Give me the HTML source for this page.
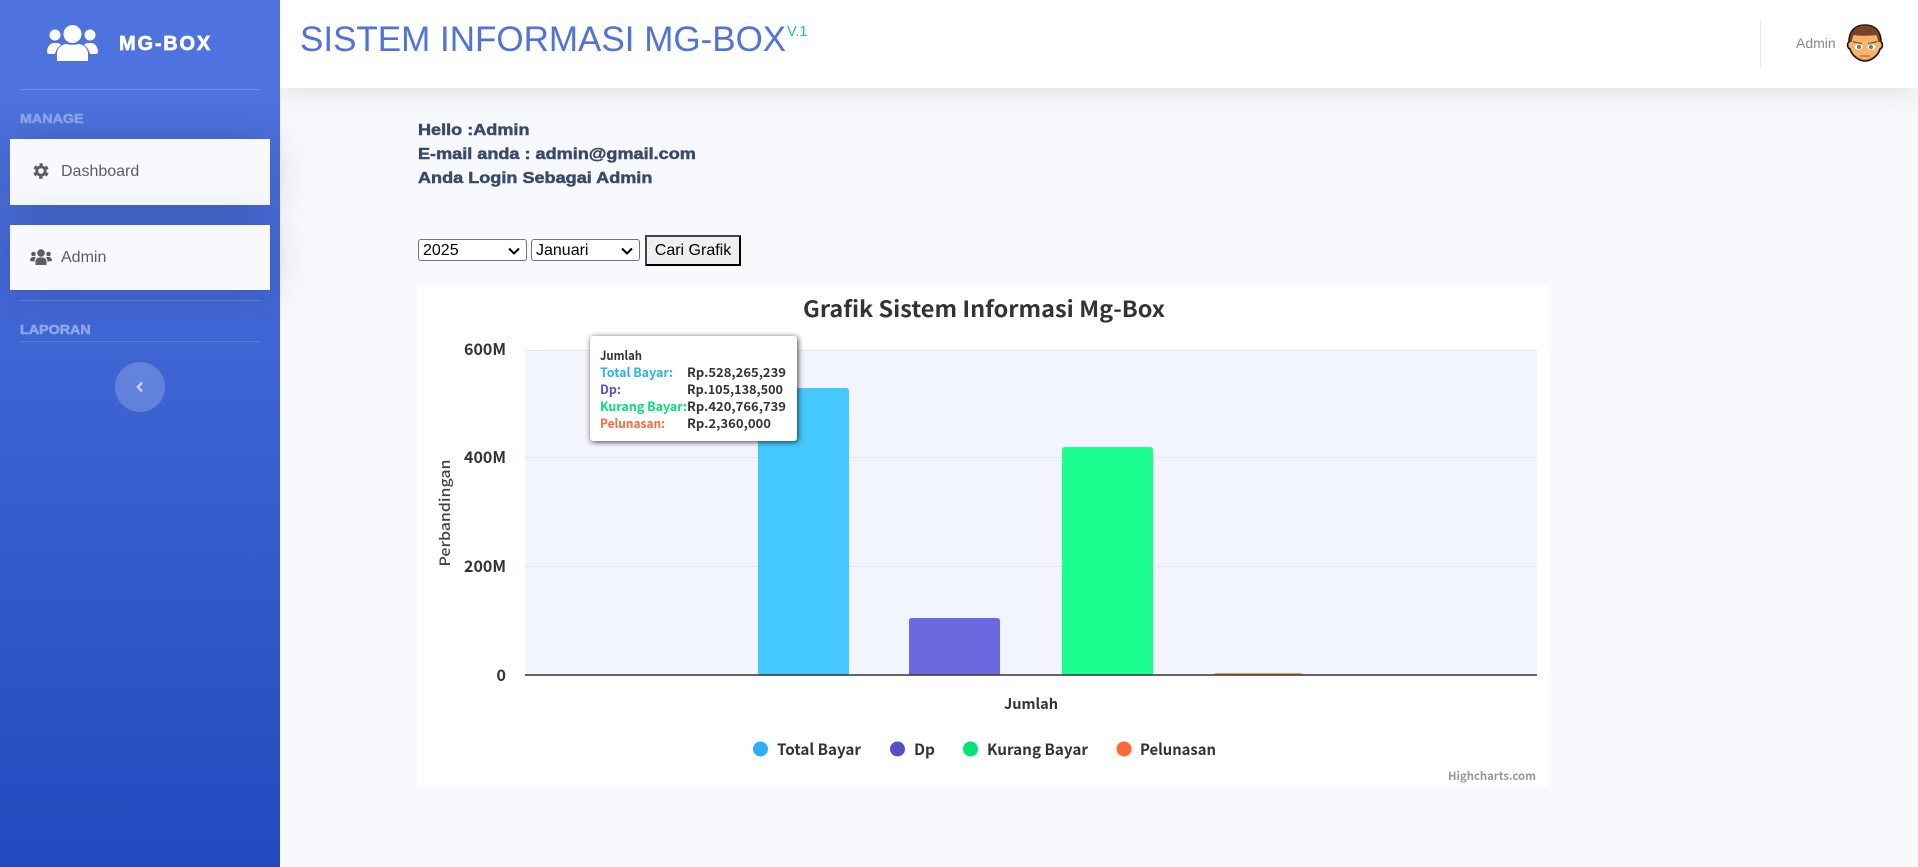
<!DOCTYPE html>
<html><head><meta charset="utf-8"><title>MG-BOX</title>
<style>
html,body{margin:0;padding:0;width:1918px;height:867px;overflow:hidden;background:#f8f9fc;font-family:"Liberation Sans",sans-serif}
.a{position:absolute;white-space:nowrap}
#side{left:0;top:0;width:280px;height:867px;background:linear-gradient(180deg,#4e73df 10%,#224abe 100%)}
.item{left:10px;width:260px;background:#f8f9fc;color:#5a5c69;font-size:16px;box-sizing:border-box;box-shadow:0 2px 40px rgba(40,40,70,.25)}
.lab{left:20px;font-size:13px;font-weight:bold;color:#8fa6ea;-webkit-text-stroke:.55px #8fa6ea;transform:scaleX(1.1);transform-origin:0 0}
#top{left:280px;top:0;width:1638px;height:88px;background:#fff;box-shadow:0 2px 28px rgba(58,59,69,.15)}
.hi{left:418px;font-size:16px;font-weight:bold;color:#3a4a6e;-webkit-text-stroke:.5px #3a4a6e;line-height:24px;transform:scaleX(1.13);transform-origin:0 0}
select{position:absolute;font:16px "Liberation Sans",sans-serif;background:#fff;color:#000;border:1px solid #767676;border-radius:3px;padding:0 0 0 4px;margin:0;box-sizing:border-box;appearance:none;-webkit-appearance:none}
button{position:absolute;font:16px "Liberation Sans",sans-serif;background:#efefef;color:#000;border:2px solid #000;border-top-color:#444;border-left-color:#444;padding:0;margin:0;box-sizing:border-box}
svg text{font-family:"Noto Sans CJK SC","Liberation Sans",sans-serif;font-weight:bold}
</style></head>
<body>
<div class="a" id="top"></div>
<div class="a" style="left:300px;top:19px;font-size:35px;line-height:41px;color:#4e73df">SISTEM INFORMASI MG-BOX</div>
<div class="a" style="left:787px;top:24px;font-size:14.5px;line-height:17px;color:#1cc88a">V.1</div>
<div class="a" style="left:1760px;top:20px;width:1px;height:48px;background:#e3e6f0"></div>
<div class="a" style="left:1796px;top:35px;font-size:14px;line-height:16px;color:#858796">Admin</div>
<svg class="a" style="left:1846px;top:23px" width="38" height="40" viewBox="0 0 38 40">
<path d="M3 19C3 7 10 2 19 2s16 5 16 17c2 1 2 6-1 7-2 7-9 12-15 12S6 33 4 26c-3-1-3-6-1-7z" fill="#f8b468" stroke="#161616" stroke-width="1.600"/>
<path d="M4 19C3 8 10 3 19 3s16 5 15 16h-2c0-3-1-6-2-7-6 1-16 1-22 0-1 1-2 4-2 7z" fill="#7b4229"/>
<path d="M7 18l9 2v1l-9-1.500zM31 18l-9 2v1l9-1.500z" fill="#8a5230"/>
<ellipse cx="12.500" cy="24" rx="4" ry="2.800" fill="#fff"/><ellipse cx="25.500" cy="24" rx="4" ry="2.800" fill="#fff"/>
<circle cx="13" cy="24" r="2.200" fill="#3f8fae"/><circle cx="25" cy="24" r="2.200" fill="#3f8fae"/>
<path d="M14 33h10" stroke="#b06a30" stroke-width="1.200"/>
<path d="M8 30c2 5 7 7 11 7s9-2 11-7c-2 3-6 6-11 6s-9-3-11-6z" fill="#d98a44"/>
</svg>

<div class="a" id="side"></div>
<svg class="a" style="left:47px;top:25px" width="51" height="36" viewBox="0 0 51 36" fill="#fff">
<circle cx="25.500" cy="9" r="9"/><circle cx="8" cy="10" r="5.500"/><circle cx="43" cy="10" r="5.500"/>
<path d="M10 36v-7c0-6 5-10 10-10 2 1 9 1 11 0 5 0 10 4 10 10v7c-1 .5-2 .5-3 .5H13c-1 0-2 0-3-.5z"/>
<path d="M0 27c0-5 3-9 7-9h3c1 0 3 .5 4 2-3 2-5 5-6 9H3c-2 0-3-1-3-2zM51 27c0-5-3-9-7-9h-3c-1 0-3 .5-4 2 3 2 5 5 6 9h5c2 0 3-1 3-2z"/>
</svg>
<div class="a" style="left:119px;top:33px;font-size:20px;line-height:23px;font-weight:bold;color:#fff;letter-spacing:1.8px;-webkit-text-stroke:.7px #fff">MG-BOX</div>
<div class="a" style="left:20px;top:89px;width:240px;height:1px;background:rgba(255,255,255,.18)"></div>
<div class="a lab" style="top:111px;line-height:15px">MANAGE</div>
<div class="a item" style="top:139px;height:66px"></div>
<svg class="a" style="left:33px;top:163px" width="16" height="16" viewBox="0 0 16 16">
<circle cx="8" cy="8" r="4.200" fill="none" stroke="#5a5c69" stroke-width="2.800"/>
<circle cx="8" cy="8" r="6.500" fill="none" stroke="#5a5c69" stroke-width="2.600" stroke-dasharray="3.400 3.407" stroke-dashoffset="1.700" transform="rotate(-90 8 8)"/>
</svg>
<div class="a" style="left:61px;top:163px;font-size:16px;line-height:18px;color:#5a5c69">Dashboard</div>
<div class="a item" style="top:225px;height:65px"></div>
<svg class="a" style="left:30px;top:249px" width="22" height="16" viewBox="0 0 22 16" fill="#5a5c69">
<circle cx="11" cy="4" r="3.800"/><circle cx="3.500" cy="5" r="2.300"/><circle cx="18.500" cy="5" r="2.300"/>
<path d="M5.500 16v-3c0-3 2-4.500 4-4.500h3c2 0 4 1.500 4 4.500v3z"/>
<path d="M0 12c0-2 1-4 3-4h2l1 .5C5 9.500 4.500 11 4.500 12.500zM22 12c0-2-1-4-3-4h-2l-1 .5c1 1 1.500 2.500 1.500 4z"/>
</svg>
<div class="a" style="left:61px;top:249px;font-size:16px;line-height:18px;color:#5a5c69">Admin</div>
<div class="a" style="left:20px;top:300px;width:240px;height:1px;background:rgba(255,255,255,.15)"></div>
<div class="a lab" style="top:322px;line-height:15px">LAPORAN</div>
<div class="a" style="left:20px;top:341px;width:240px;height:1px;background:rgba(255,255,255,.15)"></div>
<div class="a" style="left:115px;top:362px;width:50px;height:50px;border-radius:50%;background:rgba(255,255,255,.2)"></div>
<svg class="a" style="left:135px;top:381px" width="10" height="12" viewBox="0 0 10 12"><path d="M7 1.500L2.800 6 7 10.500" fill="none" stroke="#c9d5f5" stroke-width="2.400"/></svg>

<div class="a hi" style="top:119px">Hello :Admin</div>
<div class="a hi" style="top:143px">E-mail anda : admin@gmail.com</div>
<div class="a hi" style="top:167px">Anda Login Sebagai Admin</div>

<select style="left:418px;top:239px;width:109px;height:22px"><option>2025</option></select>
<select style="left:531px;top:239px;width:109px;height:22px"><option>Januari</option></select>
<svg class="a" style="left:508px;top:247px" width="12" height="8" viewBox="0 0 12 8"><path d="M1 1.500L6 6.500 11 1.500" fill="none" stroke="#000" stroke-width="2"/></svg>
<svg class="a" style="left:621px;top:247px" width="12" height="8" viewBox="0 0 12 8"><path d="M1 1.500L6 6.500 11 1.500" fill="none" stroke="#000" stroke-width="2"/></svg>
<button style="left:645px;top:235px;width:96px;height:31px">Cari Grafik</button>

<svg class="a" style="left:417px;top:286px" width="1132" height="500" viewBox="417 286 1132 500">
<rect x="417" y="286" width="1132" height="500" rx="4" fill="#fff"/>
<text x="984" y="317" text-anchor="middle" font-size="22" fill="#333" textLength="362" lengthAdjust="spacingAndGlyphs">Grafik Sistem Informasi Mg-Box</text>
<rect x="525" y="350" width="1012" height="325" fill="#f2f4fe"/>
<path d="M525 350.500H1537M525 457.500H1537M525 566.500H1537" stroke="#e6e6f2" stroke-width="1"/>
<path d="M758 675V391q0-3 3-3h85q3 0 3 3v284z" fill="#45c7ff"/>
<path d="M909 675V621q0-3 3-3h85q3 0 3 3v54z" fill="#6c68e0"/>
<path d="M1062 675V450q0-3 3-3h85q3 0 3 3v225z" fill="#1bff8e"/>
<path d="M1214 675v-1q0-1 3-1h83q3 0 3 1v1z" fill="#ff9a5a"/>
<path d="M525 675H1537" stroke="#333" stroke-width="1.500"/>
<g font-size="16" fill="#333" text-anchor="end">
<text x="506" y="355">600M</text><text x="506" y="463">400M</text><text x="506" y="572">200M</text><text x="506" y="681">0</text>
</g>
<text transform="translate(450 513) rotate(-90)" text-anchor="middle" font-size="14" fill="#444" style="font-weight:500" textLength="107" lengthAdjust="spacingAndGlyphs">Perbandingan</text>
<text x="1031" y="709" text-anchor="middle" font-size="14.500" fill="#333" textLength="54" lengthAdjust="spacingAndGlyphs">Jumlah</text>
<circle cx="760.500" cy="749" r="7.500" fill="#2caffe"/><text x="777" y="755" font-size="15.500" fill="#333" textLength="84" lengthAdjust="spacingAndGlyphs">Total Bayar</text>
<circle cx="897.500" cy="749" r="7.500" fill="#544fc5"/><text x="914" y="755" font-size="15.500" fill="#333" textLength="21" lengthAdjust="spacingAndGlyphs">Dp</text>
<circle cx="970.500" cy="749" r="7.500" fill="#00e272"/><text x="987" y="755" font-size="15.500" fill="#333" textLength="101" lengthAdjust="spacingAndGlyphs">Kurang Bayar</text>
<circle cx="1124" cy="749" r="7.500" fill="#fe6a35"/><text x="1140" y="755" font-size="15.500" fill="#333" textLength="76" lengthAdjust="spacingAndGlyphs">Pelunasan</text>
<text x="1536" y="780" text-anchor="end" font-size="11.500" fill="#999" textLength="88" lengthAdjust="spacingAndGlyphs">Highcharts.com</text>
</svg>

<div class="a" style="left:590px;top:336px;width:207px;height:105px;background:#fff;border-radius:3px;box-shadow:1px 1px 6px rgba(0,0,0,.75)"></div>
<svg class="a" style="left:590px;top:336px" width="207" height="105" viewBox="590 336 207 105" font-size="12.500">
<text x="600" y="360" fill="#333" textLength="42" lengthAdjust="spacingAndGlyphs">Jumlah</text>
<text x="600" y="377" fill="#2caffe" textLength="73" lengthAdjust="spacingAndGlyphs">Total Bayar:</text>
<text x="687" y="377" fill="#333" textLength="99" lengthAdjust="spacingAndGlyphs">Rp.528,265,239</text>
<text x="600" y="394" fill="#544fc5" textLength="21" lengthAdjust="spacingAndGlyphs">Dp:</text>
<text x="687" y="394" fill="#333" textLength="96" lengthAdjust="spacingAndGlyphs">Rp.105,138,500</text>
<text x="600" y="411" fill="#00e272" textLength="87" lengthAdjust="spacingAndGlyphs">Kurang Bayar:</text>
<text x="687" y="411" fill="#333" textLength="99" lengthAdjust="spacingAndGlyphs">Rp.420,766,739</text>
<text x="600" y="428" fill="#fe6a35" textLength="65" lengthAdjust="spacingAndGlyphs">Pelunasan:</text>
<text x="687" y="428" fill="#333" textLength="84" lengthAdjust="spacingAndGlyphs">Rp.2,360,000</text>
</svg>
</body></html>
